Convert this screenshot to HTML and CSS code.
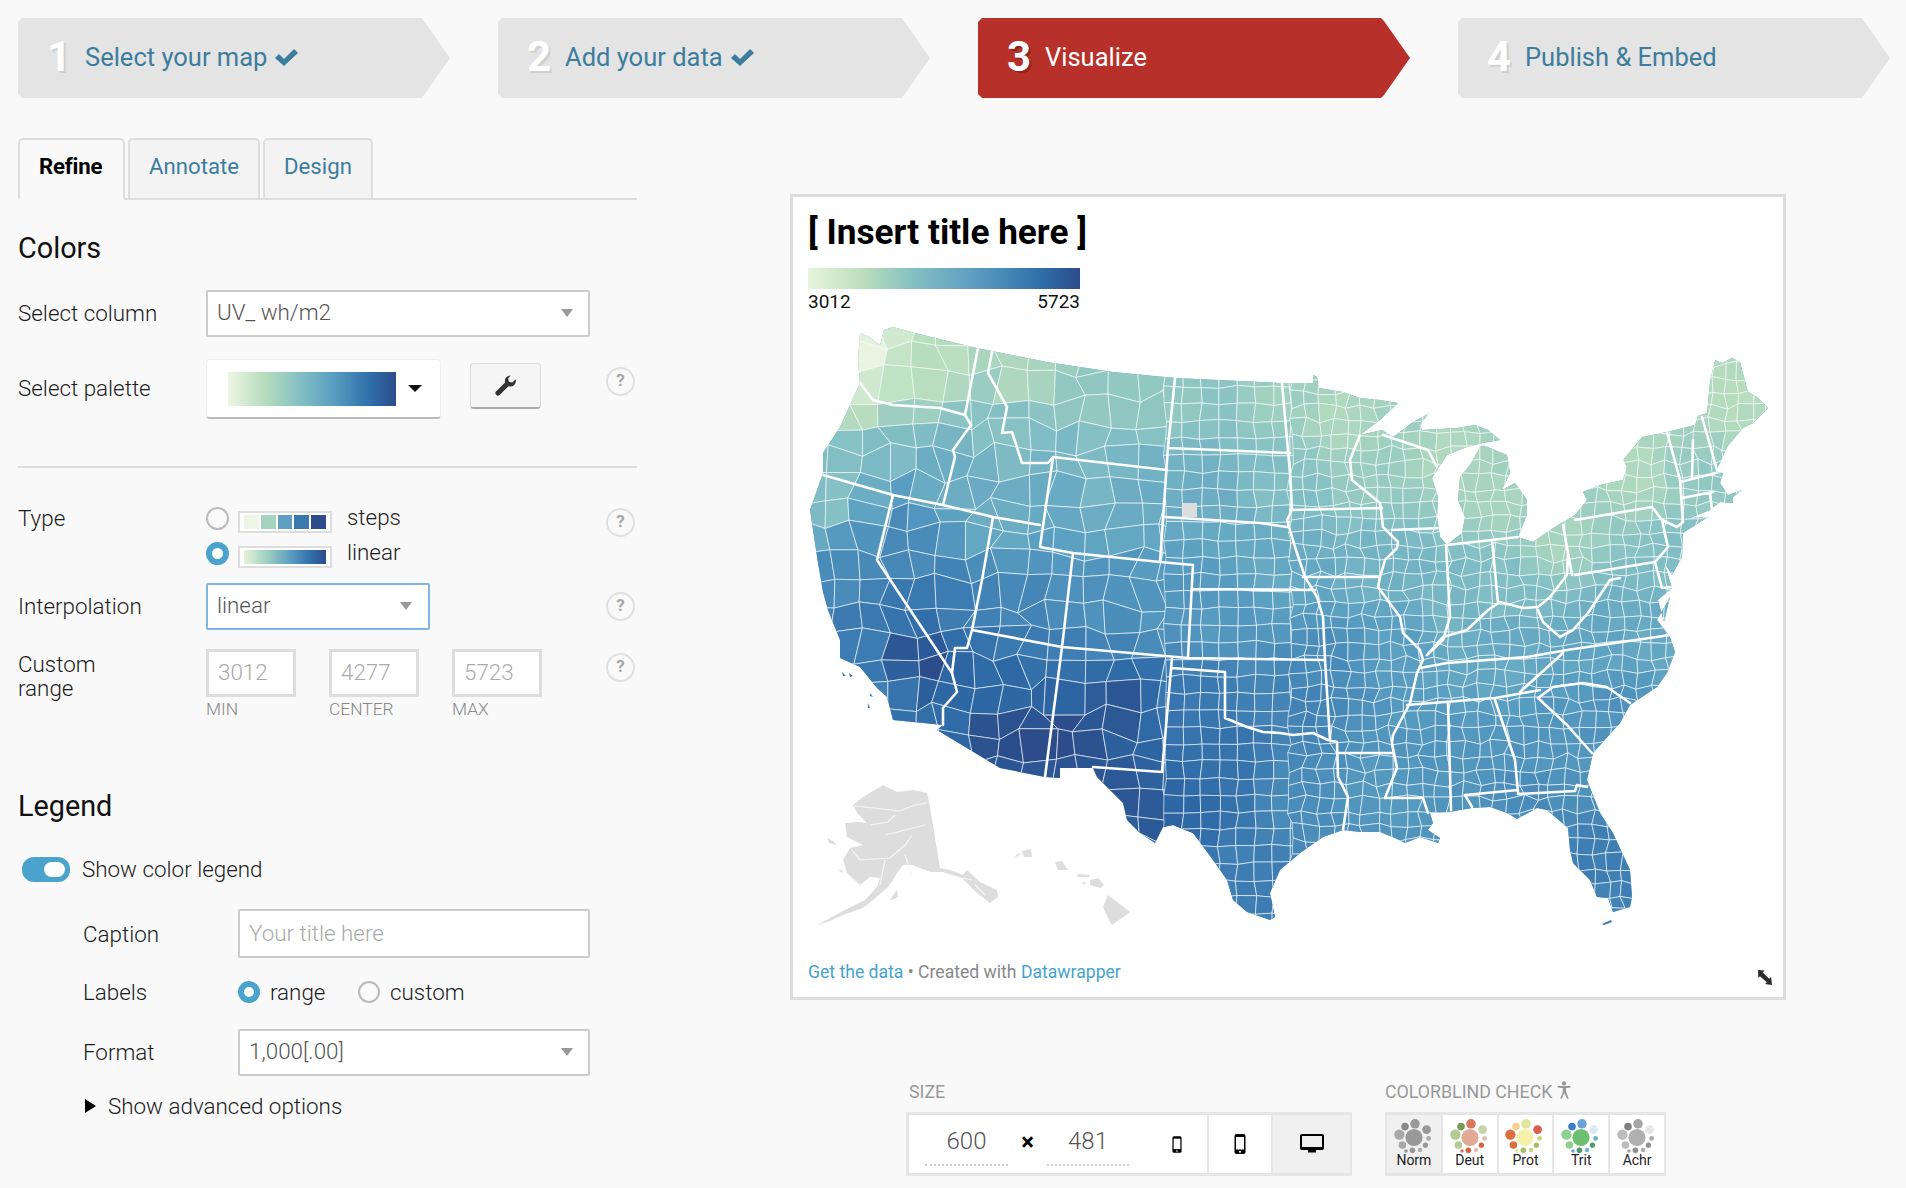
FILE: index.html
```html
<!DOCTYPE html>
<html lang="en">
<head>
<meta charset="utf-8">
<title>Visualize</title>
<link rel="stylesheet" href="styles.css">
</head>
<body>
<svg class="defs" width="0" height="0" aria-hidden="true">
  <symbol id="cluster" viewBox="0 0 40 34">
    <circle class="d1" cx="20" cy="18.5" r="8.6"/>
    <circle class="d2" cx="21" cy="4.8" r="4.8"/>
    <circle class="d3" cx="11" cy="7.6" r="3.8"/>
    <circle class="d4" cx="5.4" cy="15.6" r="5.2"/>
    <circle class="d5" cx="32.6" cy="10.6" r="4.4"/>
    <circle class="d6" cx="34.6" cy="19.4" r="2.4"/>
    <circle class="d7" cx="31.4" cy="26.2" r="2.6"/>
    <circle class="d6" cx="26" cy="31" r="2.2"/>
    <circle class="d7" cx="18.4" cy="31.2" r="2.8"/>
    <circle class="d4" cx="8.4" cy="26" r="3.8"/>
    <circle class="d2" cx="12" cy="32" r="1.8"/>
  </symbol>
  <symbol id="phone" viewBox="0 0 12 20">
    <rect class="ic-body" x="0.5" y="0" width="11" height="20" rx="2"/>
    <rect class="ic-screen" x="2" y="3" width="8" height="12.5"/>
    <circle class="ic-screen" cx="6" cy="17.8" r="1"/>
  </symbol>
</svg>

<nav class="steps">
  <a class="step"><span class="num">1</span><span class="step-label">Select your map</span><svg class="check" viewBox="0 0 23 17"><path d="M0 9l4-4 5 5L19 0l4 4L9 17z"/></svg></a>
  <a class="step"><span class="num">2</span><span class="step-label">Add your data</span><svg class="check" viewBox="0 0 23 17"><path d="M0 9l4-4 5 5L19 0l4 4L9 17z"/></svg></a>
  <a class="step active"><span class="num">3</span><span class="step-label">Visualize</span></a>
  <a class="step"><span class="num">4</span><span class="step-label">Publish &amp; Embed</span></a>
</nav>

<main class="main">
  <section class="controls">
    <div class="tabs">
      <div class="tab tab-active">Refine</div>
      <div class="tab">Annotate</div>
      <div class="tab">Design</div>
    </div>

    <h2 class="heading heading-colors">Colors</h2>

    <div class="row row-column">
      <label class="lbl">Select column</label>
      <div class="select select-wide">UV_ wh/m2<i class="arrow"></i></div>
    </div>

    <div class="row row-palette">
      <label class="lbl">Select palette</label>
      <div class="palette"><span class="palette-bar"></span><i class="caret"></i></div>
      <button class="wrench"><svg viewBox="0 0 21 21" width="21" height="21"><path d="M15.6 0.4a5.6 5.6 0 0 0-5.5 7.2L1 16.4a2.6 2.6 0 0 0 3.6 3.7l8.9-8.9a5.6 5.6 0 0 0 7.2-6.9l-3.5 3.3-3.2-.8-.9-3.2z"/></svg></button>
      <span class="help help-palette">?</span>
    </div>

    <hr class="divider">

    <div class="row row-type">
      <label class="lbl lbl-top">Type</label>
      <div class="type-options">
        <div class="type-option">
          <i class="radio"></i>
          <span class="swatch swatch-steps"><b></b><b></b><b></b><b></b><b></b></span>
          <span class="opt-text">steps</span>
        </div>
        <div class="type-option">
          <i class="radio radio-on"></i>
          <span class="swatch"><span class="swatch-linear"></span></span>
          <span class="opt-text">linear</span>
        </div>
      </div>
      <span class="help help-type">?</span>
    </div>

    <div class="row row-interp">
      <label class="lbl">Interpolation</label>
      <div class="select select-focus">linear<i class="arrow"></i></div>
      <span class="help">?</span>
    </div>

    <div class="row row-range">
      <label class="lbl lbl-range">Custom<br>range</label>
      <div class="range-fields">
        <div class="range-col"><div class="range-input">3012</div><div class="range-cap">MIN</div></div>
        <div class="range-col"><div class="range-input">4277</div><div class="range-cap">CENTER</div></div>
        <div class="range-col"><div class="range-input">5723</div><div class="range-cap">MAX</div></div>
      </div>
      <span class="help help-range">?</span>
    </div>

    <h2 class="heading heading-legend">Legend</h2>

    <div class="toggle-row">
      <span class="toggle"><i></i></span>
      <span class="toggle-text">Show color legend</span>
    </div>

    <div class="sub">
      <div class="sub-row sub-caption">
        <label class="lbl">Caption</label>
        <div class="text-input">Your title here</div>
      </div>
      <div class="sub-row sub-labels">
        <label class="lbl">Labels</label>
        <div class="radios">
          <i class="radio radio-on"></i><span class="radio-text first">range</span>
          <i class="radio"></i><span class="radio-text">custom</span>
        </div>
      </div>
      <div class="sub-row sub-format">
        <label class="lbl">Format</label>
        <div class="select select-full">1,000[.00]<i class="arrow"></i></div>
      </div>
      <div class="advanced"><i class="tri"></i>Show advanced options</div>
    </div>
  </section>

  <section class="preview">
    <figure class="chart">
      <h1 class="chart-title">[ Insert title here ]</h1>
      <div class="legend-bar"></div>
      <div class="legend-labels"><span>3012</span><span>5723</span></div>

      <svg class="map" viewBox="793 312 990 630" width="990" height="630" role="img" aria-label="Map of the United States by county">
        <defs>
          <clipPath id="us">
            <path d="M860 333L868 336 880 345 884 330 893 327 923 335 977 348 1047 362 1113 372 1175 378 1280 383 1313 383 1313 375 1317 377 1319 388 1343 392 1360 398 1380 400 1398 403 1380 420 1360 435 1382 430 1393 437 1413 422 1428 414 1420 425 1422 430 1457 428 1475 425 1488 430 1500 440 1483 443 1467 447 1447 455 1432 478 1438 497 1437 517 1440 537 1447 545 1462 533 1465 517 1458 500 1460 477 1470 465 1480 447 1483 445 1507 455 1510 473 1502 490 1515 483 1527 500 1527 515 1518 537 1533 542 1553 528 1575 515 1587 500 1583 492 1600 485 1623 480 1627 467 1623 460 1642 437 1667 432 1695 425 1698 416 1707 413 1710 382 1715 360 1722 363 1732 358 1740 362 1748 392 1757 397 1768 408 1753 423 1743 428 1727 447 1720 463 1715 472 1723 473 1720 483 1728 495 1742 490 1733 497 1733 503 1720 502 1710 510 1690 518 1708 517 1683 533 1682 557 1672 575 1664 562 1672 588 1658 600 1664 622 1670 597 1657 620 1670 637 1675 652 1667 673 1657 687 1630 705 1620 723 1593 753 1587 780 1600 813 1613 833 1630 870 1632 897 1630 907 1613 912 1608 898 1597 897 1590 880 1573 863 1570 850 1568 828 1547 810 1537 808 1517 819 1507 813 1490 807 1472 808 1460 810 1450 812 1430 813 1433 823 1428 830 1440 838 1438 843 1420 837 1405 843 1395 838 1380 832 1360 832 1343 830 1323 837 1300 853 1280 870 1270 893 1275 917 1270 920 1247 912 1233 900 1227 880 1213 860 1193 833 1173 825 1163 827 1155 843 1140 833 1127 820 1123 803 1097 777 1093 768 1060 768 1060 778 1045 777 1000 768 937 730 943 725 893 720 887 697 877 688 860 667 840 658 840 640 828 610 823 592 818 563 813 530 810 510 823 473 823 453 840 427 860 383 858 360z"/>
          </clipPath>
        </defs>
        <rect class="map-base" x="793" y="312" width="990" height="630" clip-path="url(#us)"/>
        <g id="counties" clip-path="url(#us)"></g>
        <rect class="map-nodata" x="1183" y="503" width="14" height="14"/>
        <path class="map-states" clip-path="url(#us)" d="M860 383L873 400 893 405 940 408 965 415M978 348L965 415 971 425 953 450 955 457 943 505M992 352L988 373 1007 407 1002 433 1012 432 1022 463 1048 463 1053 457 1167 470M1175 378L1168 447 1160 562M1168 448L1290 453M1053 457L1040 547 1073 553 1160 562 1193 565 1188 657M1165 517L1260 523 1287 527M1193 589L1315 590M1073 553L1062 647M972 630L1062 647 1188 658 1325 660M993 517L982 580 972 630 967 648 955 648 952 673 957 692 943 708 943 725M823 475L893 495 943 505 993 517 1040 525M893 495L877 560 952 673M1062 647L1045 777M1172 658L1162 772 1093 767M1172 668L1225 672 1225 718 1247 727 1263 732 1280 733 1293 735 1313 733 1328 740 1337 742 1338 777 1348 797 1343 830M1338 753L1393 753M1380 577L1378 587 1400 617 1403 633 1420 650 1423 660 1417 673 1410 703 1393 735 1392 743 1397 768 1385 798 1423 798 1428 813M1290 510L1382 508M1360 435L1350 460 1352 480 1380 503 1383 527 1398 542 1397 548 1385 560 1380 577 1303 577M1282 383L1287 440 1290 473 1292 510 1287 520 1295 547 1305 577 1317 597 1323 617 1325 660 1330 740M1393 530L1440 528M1383 435L1428 450 1437 467M1446 545L1450 617 1443 640 1427 655 1443 637 1467 630 1488 610 1500 602 1523 608 1538 607 1550 597 1567 575 1568 553 1563 525M1492 540L1498 603M1447 545L1518 537M1420 668L1447 663 1527 657 1567 650 1670 635M1538 610L1543 622 1560 637 1573 630 1588 613 1610 580 1620 578M1575 575L1655 562M1563 525L1572 575M1575 520L1652 507 1662 520 1677 527 1683 522M1662 520L1668 547 1655 562 1662 588 1672 587M1667 432L1680 480 1683 522M1693 440L1692 477M1702 417L1717 470M1680 482L1720 472M1682 498L1713 492M1710 493L1712 510M1563 653L1520 692M1407 705L1495 698 1540 690M1538 698L1553 687 1583 683 1607 687 1630 703M1538 698L1567 725 1583 743 1592 753M1495 700L1515 760 1518 793M1448 703L1451 810M1518 794L1575 791 1577 785 1587 787M1465 795L1518 790M1465 795L1472 807"/>
        <g class="map-extra">
          <path d="M883 785L897 792 913 790 927 793 930 807 940 868 950 870 963 875 967 870 980 882 997 890 998 897 990 903 977 893 962 878 943 872 930 872 913 865 903 865 897 873 893 880 887 888 873 900 863 908 843 915 830 921 817 925 830 918 845 910 865 900 877 887 880 878 870 877 860 885 847 873 843 860 850 848 863 845 847 837 845 823 857 822 867 823 857 813 853 805 863 797 880 787z"/>
          <path d="M827 838L833 841 837 845 829 843zM838 869L843 871 842 873zM890 900L897 890 898 897 892 900z"/>
          <path d="M1103 907L1108 895 1130 912 1112 925 1108 918zM1022 851L1031 849 1032 857 1024 857zM1013 858L1019 853 1020 855zM1055 862L1062 861 1068 870 1058 870zM1077 874L1090 875 1089 877 1078 877zM1090 880L1098 878 1104 885 1100 888 1090 885zM1082 882L1086 882 1085 885z"/>
          <path class="map-alaska-lines" d="M855 806L900 811 915 805 927 803M870 825L888 822 895 815M860 860L890 858 905 845 912 835M885 860L880 885M905 855L912 875M885 835L905 830 925 825M962 878L972 880M975 885L985 895M860 860L852 850"/>
        </g>
        <path class="map-islands" d="M842 672L846 676 843 676zM849 673L853 676 850 677zM870 693L873 697 870 696zM868 703L870 708 868 708zM1602 924L1611 920 1612 922 1604 925z"/>
      </svg>

      <figcaption class="chart-foot"><a>Get the data</a> • Created with <a>Datawrapper</a></figcaption>
      <svg class="resize" viewBox="0 0 16 15" width="16" height="15"><path d="M0 0l6.5.6-1.8 1.8 6.6 6.4 1.8-1.8.9 8-7-1 1.8-1.8L2 6.2.3 7.8z"/></svg>
    </figure>

    <div class="tools">
      <div class="tool">
        <div class="tool-label">SIZE</div>
        <div class="size-box">
          <div class="seg seg-fields">
            <span class="dim dim-w">600</span>
            <span class="times">×</span>
            <span class="dim dim-h">481</span>
            <svg class="phone-s" width="10" height="17"><use href="#phone"/></svg>
          </div>
          <div class="seg seg-icon"><svg width="12" height="20"><use href="#phone"/></svg></div>
          <div class="seg seg-icon seg-on">
            <svg viewBox="0 0 24 20" width="24" height="20"><path class="ic-body" d="M2 0h20a2 2 0 0 1 2 2v12a2 2 0 0 1-2 2h-6v2.5h-8V16H2a2 2 0 0 1-2-2V2a2 2 0 0 1 2-2z"/><rect class="ic-screen" x="2" y="2" width="20" height="11"/></svg>
          </div>
        </div>
      </div>
      <div class="tool tool-cb">
        <div class="tool-label">COLORBLIND CHECK<svg class="person" viewBox="0 0 14 18" width="14" height="18"><circle cx="7" cy="2.4" r="2.1"/><path d="M0.5 5h13v1.6l-4.6.6.4 4 2.4 6.2-1.6.4L7.2 12 4.9 17.8l-1.6-.4 2.4-6.2.4-4-5.6-.6z"/></svg></div>
        <div class="cb-box">
          <div class="cb cb-norm cb-on"><svg width="40" height="34"><use href="#cluster"/></svg><span>Norm</span></div>
          <div class="cb cb-deut"><svg width="40" height="34"><use href="#cluster"/></svg><span>Deut</span></div>
          <div class="cb cb-prot"><svg width="40" height="34"><use href="#cluster"/></svg><span>Prot</span></div>
          <div class="cb cb-trit"><svg width="40" height="34"><use href="#cluster"/></svg><span>Trit</span></div>
          <div class="cb cb-achr"><svg width="40" height="34"><use href="#cluster"/></svg><span>Achr</span></div>
        </div>
      </div>
    </div>
  </section>
</main>
<script src="script.js"></script>
</body>
</html>
```

FILE: styles.css
```css
* { box-sizing: border-box; }
html, body { margin: 0; height: 100%; }
body {
  background: #f9f9f9;
  color: #1c1c1c;
  font: 300 22.4px/26px Roboto, "Liberation Sans", sans-serif;
  overflow: hidden;
}
.defs { position: absolute; }

/* wizard steps */
.steps { display: flex; gap: 48px; padding: 18px 0 0 18px; }
.step {
  display: flex;
  align-items: center;
  width: 432px;
  height: 80px;
  padding: 0 0 2px 29px;
  background: #e4e4e4;
  color: #3c7d9e;
  font-size: 25.5px;
  font-weight: 400;
  clip-path: polygon(4px 0, 403px 0, 406px 3px, 432px 40px, 406px 77px, 403px 80px, 4px 80px, 0 76px, 0 4px);
}
.step.active { background: #b8302a; color: #fff; }
.num {
  width: 38px;
  font-size: 42px;
  font-weight: 700;
  color: #fff;
  text-shadow: 2px 2px 0 #cfcfcf;
}
.active .num { text-shadow: 2px 2px 0 #8d2420; }
.check { width: 23px; height: 17px; margin-left: 8px; fill: #3c7d9e; }

/* layout */
.main { display: flex; padding-left: 18px; }
.controls { width: 619px; flex: none; }
.preview { margin-left: 153px; padding-top: 96px; }

/* tabs */
.tabs {
  display: flex;
  gap: 3px;
  height: 62px;
  margin-top: 40px;
  border-bottom: 2px solid #ddd;
}
.tab {
  height: 62px;
  padding: 13px 19px 0;
  background: #f3f3f3;
  border: 2px solid #ddd;
  border-radius: 5px 5px 0 0;
  color: #3c7d9e;
  font-size: 22.2px;
  font-weight: 400;
}
.tab-active {
  width: 107px;
  padding-left: 19px;
  background: #f9f9f9;
  border-bottom-color: #f9f9f9;
  color: #000;
  font-weight: 700;
  letter-spacing: -0.2px;
}

/* headings */
.heading { margin: 0; font-size: 28.8px; line-height: 32px; font-weight: 400; color: #111; }
.heading-colors { margin-top: 32px; }
.heading-legend { margin-top: 71px; }

/* rows */
.row { display: flex; }
.lbl { flex: none; width: 188px; }
.row, .sub-row { align-items: center; }
.row-column { margin-top: 26px; }
.row-column .lbl, .row-interp .lbl, .sub-format .lbl { margin-bottom: 2px; }
.row-palette { margin-top: 22px; align-items: flex-start; }
.row-palette .lbl { margin-top: 16px; }
.row-type { margin-top: 39px; align-items: flex-start; }
.lbl-top { margin-top: -2px; }
.row-interp { margin-top: 16px; }
.row-range { margin-top: 19px; align-items: flex-start; }
.lbl-range { margin-top: 3px; line-height: 24px; }

.select, .text-input {
  position: relative;
  height: 47px;
  padding: 0 9px;
  background: #fff;
  border: 2px solid #ccc;
  border-radius: 2px;
  color: #555;
  line-height: 40px;
}
.select-wide { width: 384px; }
.select-focus { width: 224px; border-color: #7eb6e6; }
.select-full { width: 352px; }
.arrow {
  position: absolute;
  top: 17px;
  right: 15px;
  border-top: 8px solid #999;
  border-left: 6.5px solid transparent;
  border-right: 6.5px solid transparent;
}
.select-focus .arrow { right: 16px; }

.palette {
  display: flex;
  align-items: center;
  width: 235px;
  height: 60px;
  margin-left: 0;
  padding-left: 21px;
  background: #fff;
  border: 1px solid #eee;
  border-bottom: 2px solid #bbb;
  border-radius: 4px;
}
.palette-bar {
  width: 168px;
  height: 34px;
  background: linear-gradient(90deg, #edf6e4, #b6dcbd 22%, #7fbcc4 45%, #5a9fc2 62%, #2f6ea9 85%, #2c4c8a);
}
.caret {
  margin-left: 12px;
  border-top: 7px solid #111;
  border-left: 7px solid transparent;
  border-right: 7px solid transparent;
}
.wrench {
  display: flex;
  align-items: center;
  justify-content: center;
  width: 71px;
  height: 46px;
  margin: 4px 0 0 29px;
  padding: 0;
  background: #f5f5f5;
  border: 1px solid #ddd;
  border-bottom: 2px solid #aaa;
  border-radius: 4px;
}
.wrench path { fill: #333; }

.help {
  flex: none;
  width: 29px;
  height: 29px;
  margin-left: auto;
  margin-right: 2px;
  border: 2px solid #e0e0e0;
  border-radius: 50%;
  color: #a6a6a6;
  font-size: 17px;
  font-weight: 700;
  line-height: 23px;
  text-align: center;
}
.help-palette { margin-top: 8px; }
.help-type { margin-top: 1px; }
.help-range { margin-top: 4px; }

.divider { height: 2px; margin: 47px 0 0; border: 0; background: #ddd; }

/* type */
.type-options { display: flex; flex-direction: column; gap: 10px; }
.type-option { display: flex; align-items: flex-start; height: 25px; }
.radio {
  flex: none;
  width: 23px;
  height: 23px;
  background: #fafafa;
  border: 2px solid #bbb;
  border-radius: 50%;
}
.radio-on { background: #fff; border: 6px solid #4aa3cc; }
.swatch {
  display: flex;
  width: 94px;
  height: 22px;
  margin: 4px 0 0 9px;
  padding: 2px 4px;
  gap: 2px;
  background: #fff;
  border: 2px solid #ddd;
}
.swatch b { flex: 1; }
.swatch b:nth-child(1) { background: #edf6e4; }
.swatch b:nth-child(2) { background: #a4d3c0; }
.swatch b:nth-child(3) { background: #5f9fc3; }
.swatch b:nth-child(4) { background: #3a78b0; }
.swatch b:nth-child(5) { background: #2c4c8a; }
.swatch-linear { flex: 1; background: linear-gradient(90deg, #e4f2d8, #9fd0c0 28%, #5f9fc3 55%, #2f6ea9 82%, #2c4c8a); }
.opt-text { margin: -1px 0 0 15px; line-height: 22px; }

/* range */
.range-fields { display: flex; gap: 33px; }
.range-col { width: 90px; }
.range-input {
  height: 48px;
  padding-left: 9px;
  background: #fff;
  border: 3px solid #ddd;
  color: #aaa;
  line-height: 40px;
}
.range-cap { margin-top: 2px; color: #888; font-size: 17.4px; line-height: 20px; }

/* legend */
.toggle-row { display: flex; align-items: center; gap: 12px; margin: 35px 0 0 4px; height: 25px; }
.toggle { position: relative; width: 48px; height: 25px; background: #4aa3cc; border-radius: 12px; }
.toggle i { position: absolute; top: 5px; right: 5px; width: 21px; height: 15px; background: #fff; border-radius: 8px; }
.toggle-text { margin-bottom: 2px; }
.sub { padding-left: 65px; }
.sub-row { display: flex; }
.sub .lbl { width: 155px; }
.sub-caption { margin-top: 27px; }
.text-input { width: 352px; height: 49px; color: #aaa; line-height: 45px; }
.sub-labels { margin-top: 21px; }
.radios { display: flex; align-items: center; height: 24px; }
.radios .radio { width: 22px; height: 22px; }
.radio-text { margin-left: 10px; line-height: 24px; }
.radio-text.first { margin-right: 32px; width: 56px; }
.sub-format { margin-top: 24px; }
.advanced { display: flex; align-items: center; margin: 17px 0 0 2px; }
.tri {
  margin-right: 12px;
  border-left: 11px solid #000;
  border-top: 7px solid transparent;
  border-bottom: 7px solid transparent;
}

/* chart */
.chart {
  position: relative;
  width: 996px;
  height: 806px;
  margin: 0;
  padding: 13px 15px 0;
  background: #fff;
  border: 3px solid #ddd;
}
.chart-title { margin: 0; color: #000; font-size: 35.2px; font-weight: 700; line-height: 44px; }
.legend-bar {
  width: 272px;
  height: 21px;
  margin-top: 14px;
  background: linear-gradient(90deg, #e8f4dc, #bcdfbd 20%, #86c0c1 38%, #5f9fc3 60%, #2f6ea9 86%, #2c4c8a);
}
.legend-labels {
  display: flex;
  justify-content: space-between;
  width: 272px;
  margin: 2px 0 -1px;
  font-size: 19px;
  font-weight: 400;
  line-height: 22px;
  color: #111;
}
.map { display: block; margin-left: -15px; }
.map-base { fill: #6aa8c4; }
.map-nodata { fill: #ddd; }
.map-states { fill: none; stroke: #fff; stroke-width: 2.6; stroke-linejoin: round; stroke-linecap: round; }
.map-extra path { fill: #ddd; }
.map-extra .map-alaska-lines { fill: none; stroke: #f6f6f6; stroke-width: 1.2; }
.map-islands { fill: #3a78b0; }
.county { stroke: rgba(255, 255, 255, 0.62); stroke-width: 1; stroke-linejoin: round; }
.chart-foot { margin-top: 19px; color: #888; font-size: 17.6px; font-weight: 400; line-height: 22px; }
.chart-foot a { color: #44a3cf; }
.resize { position: absolute; right: 9px; bottom: 12px; }
.resize path { fill: #2c2c2c; }

/* tools */
.tools { display: flex; gap: 33px; margin: 82px 0 0 116px; }
.tool-label { height: 20px; padding-left: 3px; color: #999; font-size: 17.8px; font-weight: 400; line-height: 20px; white-space: nowrap; }
.tool-cb .tool-label { padding-left: 0; }
.person { margin: -6px 0 0 5px; vertical-align: middle; }
.person circle, .person path { fill: #999; }
.size-box, .cb-box {
  display: flex;
  height: 64px;
  margin-top: 10px;
  background: #fff;
  border: 3px solid #e6e6e6;
  border-right-width: 2px;
}
.size-box { width: 446px; }
.cb-box { width: 281px; border-left-width: 2px; }
.seg { display: flex; height: 100%; border-right: 2px solid #e6e6e6; }
.seg-fields { flex: none; width: 300px; padding: 7px 0 0 16px; }
.dim {
  width: 83px;
  height: 44px;
  border-bottom: 2px dotted #ccc;
  color: #555;
  font-size: 24px;
  line-height: 38px;
  text-align: center;
}
.times { width: 39px; color: #000; font-size: 24px; font-weight: 700; line-height: 40px; text-align: center; }
.dim-h { width: 82px; }
.phone-s { margin: 14px 0 0 43px; }
.seg-icon { flex: none; align-items: center; justify-content: center; width: 64px; }
.seg-on { flex: 1; background: #f0f0f0; border-right: 0; }
.ic-body { fill: #000; }
.ic-screen { fill: #fff; }
.seg-on .ic-screen { fill: #f0f0f0; }
.cb {
  display: flex;
  flex: 1;
  flex-direction: column;
  align-items: center;
  padding-top: 4px;
  border-right: 2px solid #e6e6e6;
  color: #222;
  font-size: 14px;
  font-weight: 400;
  line-height: 15px;
}
.cb:last-child { border-right: 0; }
.cb svg { flex: none; margin-bottom: 0; }
.cb-on { background: #f0f0f0; }
.d1 { fill: var(--c1); }
.d2 { fill: var(--c2); }
.d3 { fill: var(--c3); }
.d4 { fill: var(--c4); }
.d5 { fill: var(--c5); }
.d6 { fill: var(--c6); }
.d7 { fill: var(--c7); }
.cb-norm { --c1: #999; --c2: #999; --c3: #888; --c4: #a8a8a8; --c5: #999; --c6: #aaa; --c7: #999; }
.cb-deut { --c1: #e3a997; --c2: #d9775a; --c3: #7a9a55; --c4: #b4c98f; --c5: #c7d4a8; --c6: #e9b9ac; --c7: #d8613f; }
.cb-prot { --c1: #f4f1ab; --c2: #dfe89a; --c3: #f7cf90; --c4: #dc6f3f; --c5: #d9604a; --c6: #c2d67f; --c7: #a6bd60; }
.cb-trit { --c1: #6cc070; --c2: #6ba3d8; --c3: #3e7fc4; --c4: #8fcf90; --c5: #dfe8f2; --c6: #6bb5c9; --c7: #4b9c6a; }
.cb-achr { --c1: #b0b0b0; --c2: #a5a5a5; --c3: #808080; --c4: #bcbcbc; --c5: #e6e6e6; --c6: #aaa; --c7: #8f8f8f; }
```

FILE: script.js
```js
// Fills the county layer of the map from a coarse value field.
(function () {
  var field = [
    [870,345,.03],[870,395,.12],[900,360,.15],[950,360,.2],[1020,370,.22],[1100,400,.32],[1170,400,.32],
    [1000,430,.38],[1100,470,.42],[1280,400,.28],[1340,420,.22],[1370,480,.3],[1450,460,.22],[1490,500,.25],
    [1560,540,.25],[1640,470,.22],[1740,400,.2],[1700,480,.32],[1680,560,.38],[1500,590,.38],[1450,600,.42],
    [1380,570,.45],[1280,480,.38],[1280,570,.5],[1200,500,.48],[1220,620,.58],[1130,500,.48],[1050,500,.5],
    [1000,520,.48],[950,470,.48],[880,440,.4],[830,500,.38],[850,570,.65],[900,530,.65],[890,610,.75],
    [925,665,1],[905,650,.95],[870,650,.72],[880,700,.7],[910,720,.8],[960,600,.72],[1020,600,.68],[1100,600,.62],[1170,610,.6],
    [980,690,.88],[1000,740,1],[1060,740,1],[1120,700,.95],[1120,790,.97],[1150,825,.95],[1200,700,.75],[1180,810,.88],
    [1220,760,.8],[1240,870,.72],[1300,800,.65],[1300,700,.7],[1330,660,.65],[1400,640,.55],[1500,640,.5],
    [1600,650,.52],[1650,640,.5],[1620,700,.62],[1550,740,.6],[1450,760,.6],[1380,790,.58],[1600,860,.72],[1530,800,.65]
  ];
  var ramp = [
    [0,[238,247,230]],[.2,[182,220,189]],[.38,[131,191,196]],[.55,[90,159,194]],
    [.75,[58,120,176]],[.88,[45,104,165]],[1,[44,76,138]]
  ];
  var regions = [
    { x0: 800, x1: 1172, y0: 320, y1: 860, w: 28, h: 26, jitter: .3 },
    { x0: 1165, x1: 1300, y0: 370, y1: 930, w: 18, h: 17, jitter: .1 },
    { x0: 1290, x1: 1780, y0: 350, y1: 930, w: 14.5, h: 14, jitter: .24 }
  ];
  var seed = 7;
  function rnd() {
    seed = (seed * 16807) % 2147483647;
    return seed / 2147483647;
  }
  function value(x, y) {
    var sum = 0, weight = 0;
    for (var i = 0; i < field.length; i++) {
      var dx = x - field[i][0], dy = y - field[i][1];
      var w = 1 / (Math.pow(dx * dx + dy * dy, 1.5) + 1);
      sum += w * field[i][2];
      weight += w;
    }
    return sum / weight;
  }
  function colour(t) {
    t = Math.max(0, Math.min(1, t));
    for (var i = 1; i < ramp.length; i++) {
      if (t <= ramp[i][0]) {
        var a = ramp[i - 1], b = ramp[i], f = (t - a[0]) / (b[0] - a[0]);
        return 'rgb(' + [0, 1, 2].map(function (c) {
          return Math.round(a[1][c] + (b[1][c] - a[1][c]) * f);
        }).join(',') + ')';
      }
    }
    return 'rgb(44,76,138)';
  }
  var out = '';
  regions.forEach(function (r) {
    var cols = Math.ceil((r.x1 - r.x0) / r.w), rows = Math.ceil((r.y1 - r.y0) / r.h);
    var pts = [];
    for (var i = 0; i <= cols; i++) {
      pts[i] = [];
      for (var j = 0; j <= rows; j++) {
        pts[i][j] = [
          r.x0 + i * r.w + (rnd() - .5) * 2 * r.jitter * r.w,
          r.y0 + j * r.h + (rnd() - .5) * 2 * r.jitter * r.h
        ];
      }
    }
    for (i = 0; i < cols; i++) {
      for (j = 0; j < rows; j++) {
        var c = [pts[i][j], pts[i + 1][j], pts[i + 1][j + 1], pts[i][j + 1]];
        var cx = (c[0][0] + c[2][0]) / 2, cy = (c[0][1] + c[2][1]) / 2;
        var p = c.map(function (q) { return q[0].toFixed(1) + ',' + q[1].toFixed(1); }).join(' ');
        out += '<polygon class="county" points="' + p + '" fill="' + colour(value(cx, cy) + (rnd() - .5) * .03) + '"/>';
      }
    }
  });
  document.getElementById('counties').innerHTML = out;
})();
```
